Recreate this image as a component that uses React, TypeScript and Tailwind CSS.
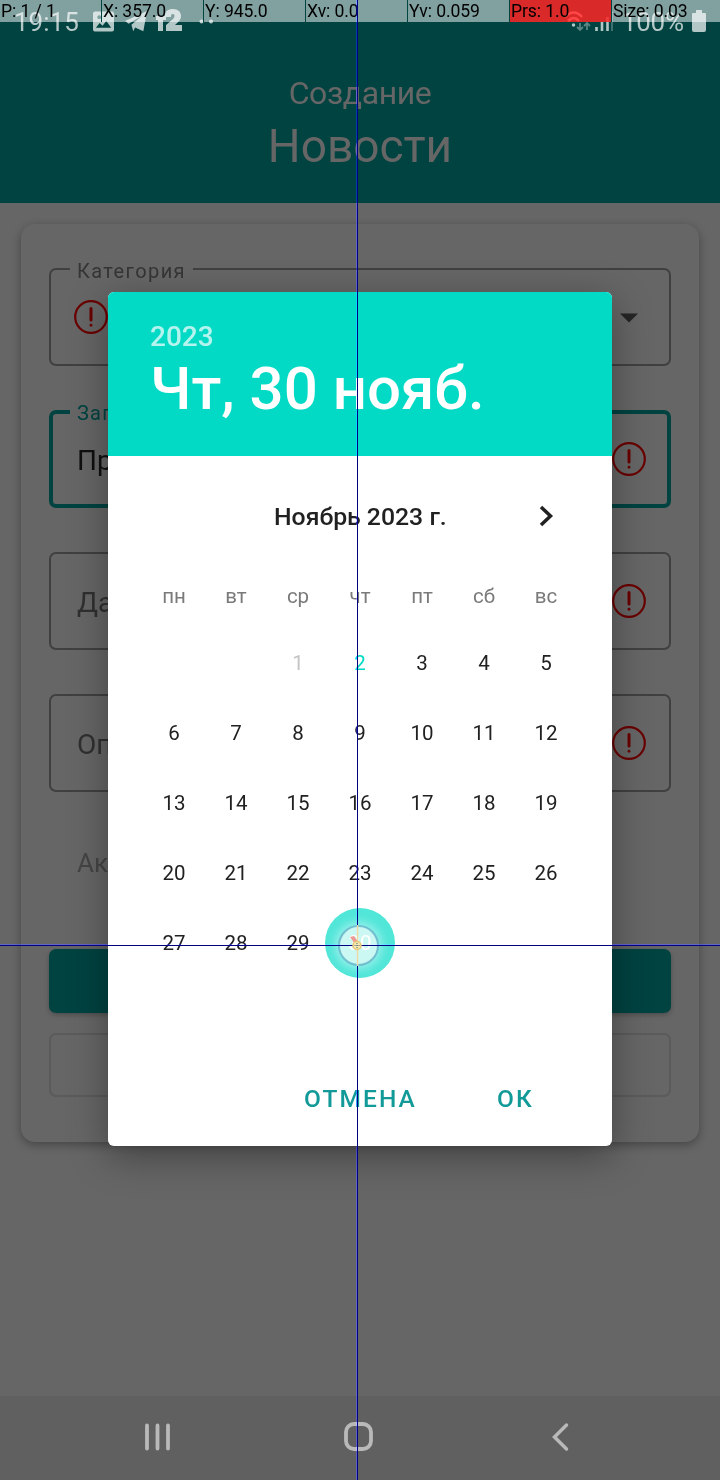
import React from "react";

const weekdays = ["пн", "вт", "ср", "чт", "пт", "сб", "вс"];
const days: (number | null)[] = [null, null, ...Array.from({ length: 30 }, (_, i) => i + 1)];

function ErrorIcon() {
  return (
    <svg width="36" height="36" viewBox="0 0 36 36" fill="none" stroke="#6a0000" className="shrink-0">
      <circle cx="18" cy="18" r="15.8" strokeWidth="2.2" />
      <path d="M18 9.500V21" strokeWidth="3" strokeLinecap="round" />
      <path d="M18 26.200V26.300" strokeWidth="2.8" strokeLinecap="round" />
    </svg>
  );
}

function StatusBar() {
  return (
    <div className="flex h-[36px] items-start text-[#b3c7c6]">
      <span className="ml-[14px] mt-[8px] w-[66px] whitespace-nowrap text-left text-[26px] leading-[28px]">19:15</span>
      <svg className="ml-[13px] mt-[11px]" width="21" height="21" viewBox="0 0 22 21" fill="currentColor">
        <path fillRule="evenodd" d="M2 0h18q2 0 2 2v17q0 2-2 2H2q-2 0-2-2V2q0-2 2-2zm1 17h16l-5-7-4 5-3-3zM6.500 4a2 2 0 1 0 .01 0z" />
      </svg>
      <svg className="ml-[11px] mt-[10px]" width="22" height="23" viewBox="0 0 24 23" fill="currentColor">
        <path d="M0 11 24 0 20 22 11 18 9 22 7 15 19 5 4 14z" />
      </svg>
      <svg className="ml-[9px] mt-[9px]" width="26" height="22" viewBox="0 0 26 22" fill="currentColor">
        <path d="M0 7h10v4H7v11H2V11H0z" />
        <path d="M9 7C9 2 12 0 17 0s8 3 8 7c0 4-3 6-6 9h7v6H10v-6l7-6c2-2 2-5 0-5s-2 1-2 3H9z" />
      </svg>
      <svg className="ml-[17px] mt-[19px]" width="16" height="5" viewBox="0 0 16 5" fill="currentColor">
        <circle cx="2.500" cy="2.500" r="2" />
        <circle cx="12" cy="2.500" r="2" />
      </svg>
      <svg className="ml-auto mr-[9px] mt-[10px]" width="50" height="22" viewBox="0 0 50 22" fill="none" stroke="currentColor">
        <path d="M2 7q9-9 17 0M5 11q6-6 11 0" strokeWidth="2.500" stroke="#ffffff" />
        <circle cx="10.500" cy="15" r="1.700" fill="currentColor" stroke="none" />
        <path d="M17 13v7m-3-3 3 3 3-3M24 20v-7m-3 3 3-3 3 3" strokeWidth="1.800" opacity=".5" />
        <path d="M33.500 21v-4M39 21v-9M44.500 21V7" strokeWidth="2.600" />
        <path d="M49 21V1" strokeWidth="2" opacity=".35" />
      </svg>
      <span className="mt-[8px] w-[65px] whitespace-nowrap text-left text-[26px] leading-[28px] tracking-[-0.3px]">100%</span>
      <svg className="ml-[5px] mr-[14px] mt-[10px]" width="14" height="22" viewBox="0 0 14 22" fill="currentColor">
        <path d="M4 0h6v3h3q1 0 1 1v16q0 2-2 2H2q-2 0-2-2V4q0-1 1-1h3z" />
      </svg>
    </div>
  );
}

function Field({ label, value, icon, active, before }: { label?: string; value?: string; icon: React.ReactNode; active?: boolean; before?: boolean }) {
  return (
    <div className={"relative flex h-[98px] shrink-0 items-center rounded-[7px] " + (active ? "border-4 border-[#004341] pl-[24px] pr-[20px]" : "border-2 border-[#404040] pl-[26px] pr-[22px]")}>
      {label && (
        <span className={"absolute h-[24px] bg-[#666666] px-[7px] text-[20px] leading-[24px] " + (active ? "-top-[13px] left-[17px] tracking-[1.2px] text-[#004341]" : "-top-[11px] left-[19px] tracking-[1.400px] text-[#353535]")}>
          {label}
        </span>
      )}
      {before && <div className="-ml-[4px]"><ErrorIcon /></div>}
      {value && <span className={"pt-[3px] text-[28px] " + (active ? "text-[#101010]" : "text-[#303030]")}>{value}</span>}
      <div className="ml-auto">{icon}</div>
    </div>
  );
}

function DatePicker() {
  return (
    <div className="absolute left-[108px] top-[292px] flex h-[854px] w-[504px] flex-col overflow-hidden rounded-[6px] bg-white">
      <div className="h-[164px] shrink-0 bg-[#03dac5] px-[42px] pt-[28px] font-medium text-white">
        <div className="text-[28px] leading-[34px] text-white/70">2023</div>
        <div className="whitespace-nowrap text-[60px] leading-[70px]">Чт, 30 нояб.</div>
      </div>
      <div className="flex h-[120px] items-center justify-center">
        <span className="ml-[91px] flex-1 pl-[75px] pt-px text-[24.800px] font-medium text-[#212121]">Ноябрь 2023 г.</span>
        <svg className="mr-[54px]" width="24" height="24" viewBox="0 0 24 24" fill="none" stroke="#212121" strokeWidth="3.500">
          <path d="m7 3 9.500 9L7 21" />
        </svg>
      </div>
      <div className="grid grid-cols-7 px-[35px] text-center text-[20.500px] leading-[40px] text-[#7a7a7a]">
        {weekdays.map((d) => <span key={d}>{d}</span>)}
      </div>
      <div className="mt-[12px] grid grid-cols-7 px-[35px] text-center text-[20.500px] text-[#212121]">
        {days.map((d, i) => (
          <div key={i} className="flex h-[70px] items-center justify-center">
            <span className={d === 30 ? "flex size-[70px] shrink-0 items-center justify-center rounded-full bg-[#50e6d8] text-white" : d === 1 ? "text-[#c4c4c4]" : d === 2 ? "text-[#03dac5]" : ""}>{d}</span>
          </div>
        ))}
      </div>
      <div className="mt-auto flex h-[96px] items-center pt-[2px] text-[24.500px] font-medium tracking-[2.1px] text-[#129a98]">
        <span className="ml-[196px] w-[193px]">ОТМЕНА</span>
        <span>ОК</span>
      </div>
    </div>
  );
}

const readings = ["P: 1 / 1", "X: 357.0", "Y: 945.0", "Xv: 0.0", "Yv: 0.059", "Prs: 1.0", "Size: 0.03"];

function PointerOverlay() {
  return (
    <>
      <div className="absolute left-[338px] top-[925px] size-[41px] rounded-full border-2 border-[#73bfd0] bg-white/70 shadow-[0_0_10px_3px_rgba(190,245,245,0.7)]" />
      <div className="absolute left-0 top-0 grid h-[22px] w-full grid-cols-[repeat(6,102px)_1fr] text-[17.600px] leading-[22px] tracking-[-0.1px] text-black">
        {readings.map((r, i) => (
          <span key={r} className={"whitespace-nowrap pl-[1px] " + (i < 6 ? "border-r border-[#004341] " : "") + (i === 5 ? "bg-[#ff2525]/85" : "bg-white/50")}>{r}</span>
        ))}
      </div>
      <div className="absolute left-0 top-[944px] h-px w-full bg-[#000060] mix-blend-plus-lighter" />
      <div className="absolute left-[356px] top-0 h-full w-px bg-[#000060] mix-blend-plus-lighter" />
      <div className="absolute left-0 top-[945px] h-px w-full bg-[#000080]" />
      <div className="absolute left-[357px] top-0 h-full w-px bg-[#000080]" />
      <svg className="absolute left-[349px] top-[925px]" width="18" height="41" viewBox="0 0 18 41">
        <path d="M8.500 0V41" stroke="#edd9a1" strokeWidth="1.500" />
        <path d="m1 12 4-1 4 6-3 2z" fill="#ef9892" />
        <circle cx="8" cy="20.500" r="4" fill="#f7eab5" stroke="#e7c875" strokeWidth="1.500" />
        <path d="M5.500 20.500h5m-2.500-2.500v5" stroke="#536a69" strokeDasharray="1 1" />
      </svg>
    </>
  );
}

export default function App() {
  return (
    <main className="relative isolate flex h-[1480px] w-[720px] flex-col overflow-hidden bg-[#666666] font-[Roboto,sans-serif]">
      <header className="h-[203px] shrink-0 bg-[#004341] text-center text-[#666666]">
        <StatusBar />
        <div className="mt-[37px] text-[32px] leading-[40px] tracking-[-0.4px]">Создание</div>
        <div className="mt-[6px] text-[46px] leading-[54px]">Новости</div>
      </header>
      <section className="mx-[21px] mt-[21px] flex h-[918px] flex-col rounded-[14px] bg-[#666666] px-[28px] pt-[44px] shadow-[0_3px_10px_rgba(0,0,0,0.32)]">
        <div className="flex flex-col gap-[44px]">
          <Field
            label="Категория"
            before
            icon={<svg className="mr-[9px] mt-[2px]" width="18" height="10" viewBox="0 0 18 10" fill="#252525"><path d="M0 .5h18L9 9.500z" /></svg>}
          />
          <Field label="Заголовок" value="Пр" active icon={<ErrorIcon />} />
          <Field value="Да" icon={<ErrorIcon />} />
          <Field value="Оп" icon={<ErrorIcon />} />
        </div>
        <div className="mt-[51px] pl-[28px] text-[26px] leading-[40px] text-[#454545]">Ак</div>
        <div className="mt-[66px] h-[64px] rounded-[7px] bg-[#004341] shadow-[0_2px_5px_rgba(0,0,0,0.25)]" />
        <div className="mt-[20px] h-[64px] rounded-[7px] border-2 border-[#5b5b5b]" />
      </section>
      <nav className="mt-auto flex h-[84px] items-center bg-[#606060] pb-[2px]">
        <svg className="ml-[144px]" width="28" height="30" viewBox="0 0 28 30" stroke="#b9b9b9" strokeWidth="3.800" strokeLinecap="round">
          <path d="M3 3.500v23M13.500 3.500v23M24 3.500v23" />
        </svg>
        <svg className="ml-[171px]" width="32" height="32" viewBox="0 0 32 32" fill="none" stroke="#b9b9b9" strokeWidth="3.800">
          <rect x="3" y="3" width="25" height="25" rx="8" />
        </svg>
        <svg className="ml-[176px]" width="20" height="30" viewBox="0 0 20 30" fill="none" stroke="#b9b9b9" strokeWidth="3.500" strokeLinecap="round">
          <path d="M15.500 3 3.500 15l12 12" />
        </svg>
      </nav>
      <div className="absolute left-[108px] top-[292px] h-[854px] w-[504px] rounded-[6px] shadow-[0_10px_38px_rgba(0,0,0,0.36)]" />
      <DatePicker />
      <PointerOverlay />
    </main>
  );
}
